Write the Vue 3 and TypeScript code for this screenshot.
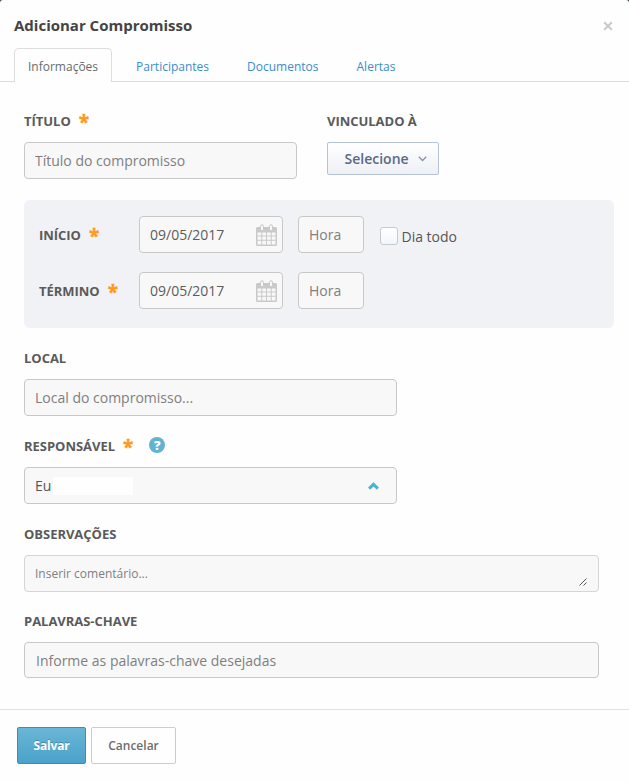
<script setup lang="ts">
import { ref } from 'vue'

interface DateRow {
  id: string
  label: string
  date: string
  hour: string
  allDay: boolean
}

const tabs: string[] = ['Informações', 'Participantes', 'Documentos', 'Alertas']
const activeTab = ref<string>('Informações')
const title = ref<string>('')
const place = ref<string>('')
const notes = ref<string>('')
const keywords = ref<string>('')
const allDay = ref<boolean>(false)
const rows = ref<DateRow[]>([
  { id: 'inicio', label: 'INÍCIO', date: '09/05/2017', hour: '', allDay: true },
  { id: 'termino', label: 'TÉRMINO', date: '09/05/2017', hour: '', allDay: false },
])
</script>

<template>
  <div class="modal">
    <header class="header">
      <h1 class="heading">Adicionar Compromisso</h1>
      <button class="close" type="button">
        <svg width="10" height="10" viewBox="0 0 10 10"><path d="M1.2 1.2L8.8 8.8M8.8 1.2L1.2 8.8" fill="none" stroke="#c9c9c9" stroke-width="2" /></svg>
      </button>
    </header>

    <nav class="tabs">
      <a v-for="tab in tabs" :key="tab" class="tab" :class="{ active: tab === activeTab }" @click="activeTab = tab">{{ tab }}</a>
    </nav>

    <main class="body">
      <div class="top-row">
        <div class="title-field">
          <label class="label" for="titulo">TÍTULO<span class="star">*</span></label>
          <input id="titulo" v-model="title" class="input" placeholder="Título do compromisso" />
        </div>
        <div>
          <div class="label">VINCULADO À</div>
          <button class="select-btn" type="button">
            <span>Selecione</span>
            <svg width="9" height="6" viewBox="0 0 9 6"><path d="M0.8 0.8L4.5 4.5L8.2 0.8" fill="none" stroke="#8094ac" stroke-width="1.3" /></svg>
          </button>
        </div>
      </div>

      <section class="panel">
        <div v-for="row in rows" :key="row.id" class="date-row">
          <label class="label row-label" :for="row.id">{{ row.label }}<span class="star">*</span></label>
          <div class="date-box">
            <input :id="row.id" v-model="row.date" class="date-input" />
            <svg class="calendar" width="21" height="22" viewBox="0 0 21 22">
              <path fill="#c9c9c9" fill-rule="evenodd" d="M1.5 3H19.5Q21 3 21 4.5V20.5Q21 22 19.5 22H1.5Q0 22 0 20.5V4.5Q0 3 1.5 3ZM1.5 8.5V11.6H5.3V8.5ZM6.3 8.5V11.6H10V8.5ZM11 8.5V11.6H14.7V8.5ZM15.7 8.5V11.6H19.5V8.5ZM1.5 12.6V15.8H5.3V12.6ZM6.3 12.6V15.8H10V12.6ZM11 12.6V15.8H14.7V12.6ZM15.7 12.6V15.8H19.5V12.6ZM1.5 16.8V20.6H5.3V16.8ZM6.3 16.8V20.6H10V16.8ZM11 16.8V20.6H14.7V16.8ZM15.7 16.8V20.6H19.5V16.8Z" />
              <rect x="4.5" y="0.7" width="3" height="6" rx="1.5" fill="#f7f7f7" stroke="#c9c9c9" />
              <rect x="13.5" y="0.7" width="3" height="6" rx="1.5" fill="#f7f7f7" stroke="#c9c9c9" />
            </svg>
          </div>
          <input v-model="row.hour" class="input hour" placeholder="Hora" />
          <label v-if="row.allDay" class="all-day">
            <input v-model="allDay" class="checkbox" type="checkbox" />
            <span>Dia todo</span>
          </label>
        </div>
      </section>

      <div class="field">
        <label class="label" for="local">LOCAL</label>
        <input id="local" v-model="place" class="input medium" placeholder="Local do compromisso..." />
      </div>

      <div class="field">
        <div class="label">
          RESPONSÁVEL<span class="star">*</span>
          <span class="help">?</span>
        </div>
        <div class="input medium owner">
          <span>Eu</span>
          <span class="owner-name"></span>
          <svg class="owner-arrow" width="11" height="8" viewBox="0 0 11 8"><path d="M1.1 6.6L5.5 2.4L9.9 6.6" fill="none" stroke="#4bb1d0" stroke-width="3" /></svg>
        </div>
      </div>

      <div class="field">
        <label class="label" for="obs">OBSERVAÇÕES</label>
        <div class="input notes-box">
          <textarea id="obs" v-model="notes" class="notes" placeholder="Inserir comentário..."></textarea>
          <svg class="grip" width="8" height="8" viewBox="0 0 8 8"><path d="M0.5 7.5L7.5 0.5M4.5 7.5L7.5 4.5" fill="none" stroke="#555" /></svg>
        </div>
      </div>

      <div class="field keywords">
        <label class="label" for="chave">PALAVRAS-CHAVE</label>
        <input id="chave" v-model="keywords" class="input" placeholder="Informe as palavras-chave desejadas" />
      </div>
    </main>

    <footer class="footer">
      <button class="btn primary" type="button">Salvar</button>
      <button class="btn" type="button">Cancelar</button>
    </footer>
  </div>
</template>

<style>
body {
  background: #3b414c;
}
</style>

<style scoped>
.modal,
.modal * {
  box-sizing: border-box;
}
.modal {
  height: 782px;
  display: flex;
  flex-direction: column;
  background: #fefefe;
  border-radius: 3px 3px 0 0;
  font-family: 'Open Sans', sans-serif;
  font-size: 14px;
  color: #555;
}
input,
textarea,
button {
  font-family: inherit;
  outline: none;
}
.header {
  height: 48px;
  flex: none;
  display: flex;
  justify-content: space-between;
  align-items: center;
  padding: 2px 16px 0 14px;
}
.heading {
  margin: 0;
  font-size: 15px;
  line-height: 20px;
  font-weight: 700;
  color: #444;
}
.close {
  display: flex;
  padding: 2px 0 0;
  border: 0;
  background: none;
}
.tabs {
  height: 34px;
  flex: none;
  display: flex;
  gap: 10px;
  padding-left: 14px;
  border-bottom: 1px solid #ddd;
}
.tab {
  height: 34px;
  padding: 0 13px;
  border: 1px solid transparent;
  border-bottom: 0;
  font-size: 12px;
  line-height: 35px;
  color: #3a8dcc;
  cursor: pointer;
}
.tab.active {
  background: #fefefe;
  border-color: #ddd;
  border-radius: 5px 5px 0 0;
  color: #6b6b6b;
}
.body {
  height: 627px;
  flex: none;
  padding: 29px 15px 0 24px;
}
.top-row {
  display: flex;
  gap: 30px;
  height: 89px;
}
.title-field {
  width: 273px;
}
.label {
  display: flex;
  align-items: center;
  height: 20px;
  margin-bottom: 11px;
  font-size: 13px;
  font-weight: 700;
  letter-spacing: -0.03px;
  color: #5a5a5a;
}
.star {
  height: 20px;
  margin-left: 8px;
  font-size: 19px;
  line-height: 23px;
  font-weight: 700;
  color: #ff9a1e;
  -webkit-text-stroke: 0.4px #ff9a1e;
}
.input,
.date-box {
  display: block;
  width: 100%;
  height: 37px;
  padding: 0 10px;
  border: 1px solid #c8c8c8;
  border-radius: 4px;
  background: #f8f8f8;
  font-size: 14px;
  color: #555;
}
::placeholder {
  color: #7f7f7f;
  opacity: 1;
}
.select-btn {
  display: flex;
  align-items: center;
  justify-content: space-between;
  width: 112px;
  height: 33px;
  padding: 0 11px 0 16.5px;
  border: 1px solid #b5c3d4;
  border-radius: 2px;
  background: linear-gradient(#fff, #edf0f5);
  font-size: 14px;
  font-weight: 600;
  color: #5a6a85;
}
.panel {
  display: flex;
  flex-direction: column;
  gap: 19px;
  width: 590px;
  height: 128px;
  padding: 16px 15px;
  border-radius: 6px;
  background: #f1f2f6;
}
.date-row {
  display: flex;
  align-items: center;
  height: 37px;
}
.row-label {
  width: 100px;
  margin: 0;
}
.date-box {
  display: flex;
  align-items: center;
  justify-content: space-between;
  width: 144px;
  padding-right: 5px;
}
.date-input {
  width: 90px;
  padding: 0;
  border: 0;
  background: none;
  font-size: 14px;
  color: #5c5c5c;
}
.calendar {
  flex: none;
}
.hour {
  width: 66px;
  margin-left: 15px;
}
.all-day {
  display: flex;
  align-items: center;
  gap: 3.5px;
  margin-left: 16px;
  padding-top: 1px;
}
.all-day span {
  padding-top: 2px;
}
.checkbox {
  appearance: none;
  width: 18px;
  height: 18px;
  margin: 2px 0 0;
  border: 1px solid #c3cad5;
  border-radius: 3px;
  background: linear-gradient(#fff, #f3f6fa);
}
.field {
  margin-top: 20px;
}
.medium {
  width: 373px;
}
.help {
  display: flex;
  align-items: center;
  justify-content: center;
  width: 16px;
  height: 16px;
  margin: -2px 0 0 16px;
  border-radius: 50%;
  background: #62b3d0;
  font-size: 13px;
  line-height: 16px;
  font-weight: 800;
  color: #fff;
}
.owner {
  display: flex;
  align-items: center;
}
.owner-name {
  width: 80px;
  height: 18px;
  margin-left: 2px;
  background: #fefefe;
}
.owner-arrow {
  margin: 0 7px 0 auto;
}
.notes-box {
  display: flex;
  width: 575px;
  border-color: #d5d5d5;
}
.notes {
  flex: 1;
  height: 35px;
  padding: 9px 0 0;
  border: 0;
  background: none;
  resize: none;
  overflow: hidden;
  font-size: 12px;
  line-height: 17px;
}
.grip {
  align-self: flex-end;
  margin: 0 1px 5px 0;
}
.keywords {
  margin-top: 19px;
}
.keywords .input {
  width: 575px;
  height: 36px;
  padding-left: 11px;
}
.footer {
  flex: 1;
  display: flex;
  gap: 5px;
  padding: 17px 17px 0;
  border-top: 1px solid #e1e1e1;
}
.btn {
  height: 37px;
  width: 85px;
  padding: 0;
  border: 1px solid #ccc;
  border-radius: 2px;
  background: #fefefe;
  font-size: 12px;
  font-weight: 600;
  color: #6d6d6d;
}
.primary {
  width: 69px;
  border-color: #3591b4;
  background: linear-gradient(#6ab6d6, #4aa2cb);
  font-weight: 700;
  letter-spacing: -0.15px;
  color: #fff;
  text-shadow: 0 -1px 0 rgba(0, 0, 0, 0.25);
}
</style>
